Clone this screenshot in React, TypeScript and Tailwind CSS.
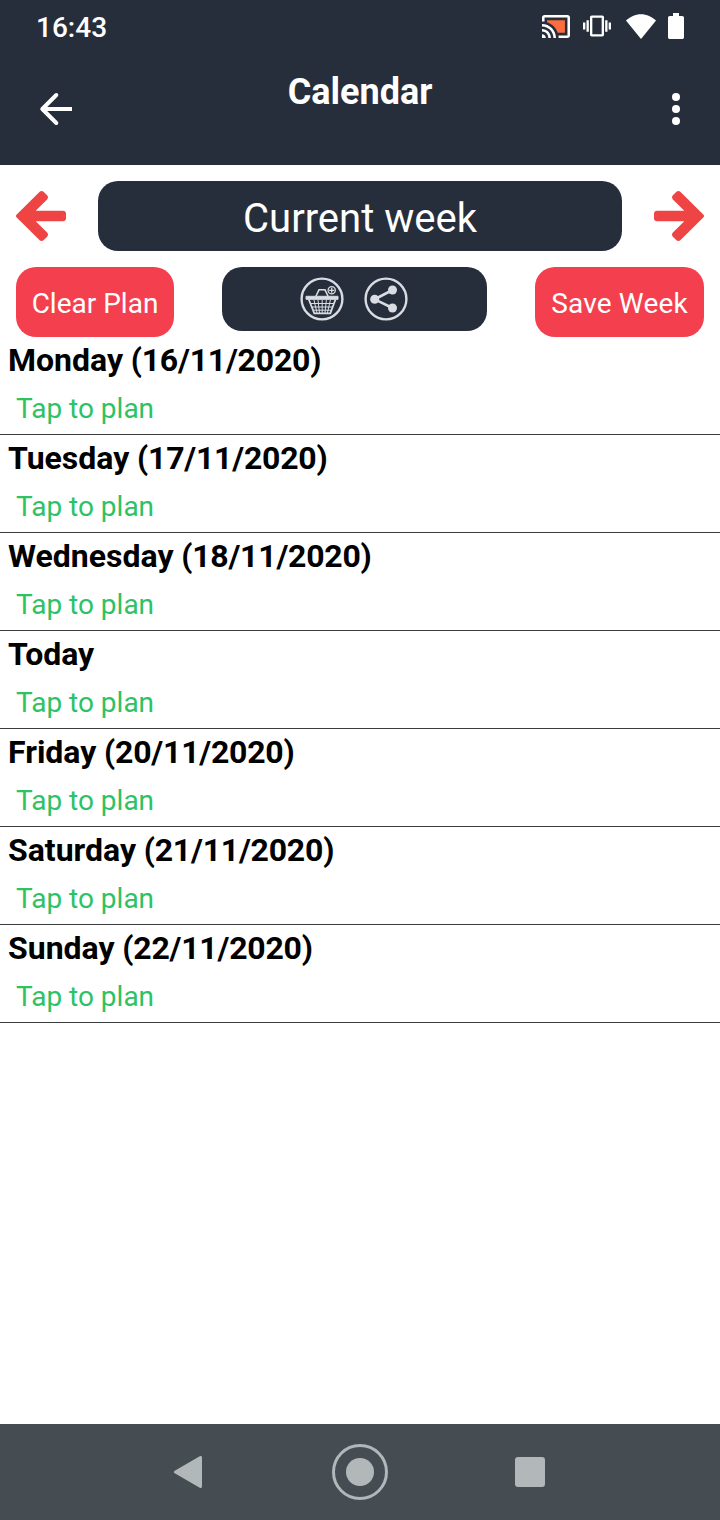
import { ReactNode } from "react";

const DAYS = [
  { name: "Monday", date: "(16/11/2020)" },
  { name: "Tuesday", date: "(17/11/2020)" },
  { name: "Wednesday", date: "(18/11/2020)" },
  { name: "Today" },
  { name: "Friday", date: "(20/11/2020)" },
  { name: "Saturday", date: "(21/11/2020)" },
  { name: "Sunday", date: "(22/11/2020)" },
];

function StatusBar() {
  return (
    <div className="flex h-[54px] items-start justify-between px-9">
      <span className="pt-px text-[28px] leading-[54px] font-medium">16:43</span>
      <div className="flex h-[52px] items-center">
        <svg className="mr-[13px] h-[23px] w-7" viewBox="1 3 22 18" fill="white">
          <path
            fill="#fd6d3f"
            d="M19 7H5v1.63c3.96 1.28 7.09 4.41 8.37 8.37H19V7z"
          />
          <path d="M1 18v3h3c0-1.66-1.34-3-3-3zm0-4v2c2.76 0 5 2.24 5 5h2c0-3.87-3.13-7-7-7zM1 10v2c4.97 0 9 4.03 9 9h2c0-6.08-4.93-11-11-11zm20-7H3c-1.1 0-2 .9-2 2v3h2V5h18v14h-7v2h7c1.1 0 2-.9 2-2V5c0-1.1-.9-2-2-2z" />
        </svg>
        <svg className="mr-[15px] h-7 w-7" viewBox="0 0 24 24" fill="white">
          <path d="M0 15h2V9H0v6zm3 2h2V7H3v10zm19-8v6h2V9h-2zm-3 8h2V7h-2v10zM16.5 3h-9C6.67 3 6 3.67 6 4.5v15c0 .83.67 1.5 1.5 1.5h9c.83 0 1.5-.67 1.5-1.5v-15c0-.83-.67-1.5-1.5-1.5zM16 19H8V5h8v14z" />
        </svg>
        <svg className="mr-3 h-[25px] w-[30px]" viewBox="0 0 30 25" fill="white">
          <path d="M0 6.6C4 2.700 9.300.2 15 .2S26 2.700 30 6.600L15 25z" />
        </svg>
        <svg className="h-[26px] w-4" viewBox="0 0 16 26" fill="white">
          <path d="M5 0h6v3h3.200c1 0 1.800.8 1.800 1.800v19.400c0 1-.8 1.800-1.800 1.800H1.800C.8 26 0 25.200 0 24.200V4.800C0 3.800.8 3 1.800 3H5z" />
        </svg>
      </div>
    </div>
  );
}

function AppBar() {
  return (
    <div className="flex h-[111px] items-start justify-between px-8 pt-4">
      <button type="button" aria-label="Back" className="mt-[15px]">
        <svg
          className="h-12 w-12"
          viewBox="0 0 48 48"
          fill="none"
          stroke="white"
          strokeWidth="4"
          strokeLinejoin="round"
        >
          <path d="M40 24H11" />
          <path d="M24.300 10 10.300 24l14 14" strokeLinecap="round" />
        </svg>
      </button>
      <h1 className="text-[36px] leading-[44px] font-bold">Calendar</h1>
      <button type="button" aria-label="More options" className="mt-[15px] flex w-12 justify-end pr-2">
        <svg className="h-12 w-2" viewBox="0 0 8 48" fill="white">
          <circle cx="4" cy="12" r="4" />
          <circle cx="4" cy="24" r="4" />
          <circle cx="4" cy="36" r="4" />
        </svg>
      </button>
    </div>
  );
}

function WeekArrow({ flip = false }: { flip?: boolean }) {
  return (
    <button type="button" aria-label={flip ? "Next week" : "Previous week"}>
      <svg
        className={flip ? "h-[50px] w-[50px] -scale-x-100" : "h-[50px] w-[50px]"}
        viewBox="0 0 50 50"
        fill="#ee4544"
      >
        <path d="M.5 23.700 23.400.9c1.300-1.200 3.100-1.200 4.400 0l3.300 3.300c1.200 1.200 1.200 3 0 4.200L19.700 19.700H47c1.800 0 3 1.200 3 2.800v5c0 1.600-1.200 2.800-3 2.800H19.700l11.400 11.300c1.200 1.200 1.200 3 0 4.200l-3.300 3.300c-1.300 1.200-3.100 1.200-4.400 0L.5 26.300c-.7-.8-.7-1.800 0-2.600z" />
      </svg>
    </button>
  );
}

function RedButton({ className, children }: { className: string; children: ReactNode }) {
  return (
    <button
      type="button"
      className={`h-[70px] rounded-[20px] bg-[#f43f4f] pt-1 text-center text-[28px] leading-8 whitespace-nowrap text-white ${className}`}
    >
      {children}
    </button>
  );
}

function BasketIcon() {
  return (
    <svg className="h-11 w-11" viewBox="0 0 44 44" fill="none" stroke="#d9dce2">
      <circle cx="22" cy="22" r="20.400" strokeWidth="2.400" />
      <path d="M15.800 19.500 19 12.800h6l3.200 6.700" strokeWidth="1.600" />
      <path d="M6 19.300h32v3H6z" fill="#d9dce2" strokeWidth="1" />
      <path d="M8.800 22.500 14.300 36.300h16l5.200-13.800" strokeWidth="1.800" />
      <path
        d="M10.500 26.500h23.500M12 30h20.500M13.500 33.200h17.500M14 23l3 13M18 23l1.500 13M22.200 23v13M26.400 23l-1.500 13M30.400 23l-3 13"
        strokeWidth="1"
      />
      <circle cx="31.700" cy="13.300" r="3.600" strokeWidth="1.300" />
      <path d="M29.200 13.300h5M31.700 10.800v5" strokeWidth="1.300" />
    </svg>
  );
}

function ShareIcon() {
  return (
    <svg className="h-11 w-11" viewBox="0 0 44 44" fill="none" stroke="#d9dce2">
      <circle cx="22" cy="22" r="20.400" strokeWidth="2.400" />
      <path d="M28.500 13 10.700 22.300 28.500 31" strokeWidth="2.600" />
      <g fill="#d9dce2" stroke="none">
        <circle cx="28.500" cy="13" r="4.500" />
        <circle cx="10.700" cy="22.300" r="4.500" />
        <circle cx="28.500" cy="31" r="4.500" />
      </g>
    </svg>
  );
}

function DayRow({ name, date }: { name: string; date?: string }) {
  return (
    <li className="h-[98px] border-b border-[#3c3c3c]">
      <h2 className="pt-1 pl-2 text-[32px] leading-[38px] font-bold text-black">
        {name}
        {date ? <span className="tracking-[-0.22px]"> {date}</span> : null}
      </h2>
      <p className="pt-[13px] pl-4 text-[28px] leading-[34px] text-[#2dc264]">Tap to plan</p>
    </li>
  );
}

// Android three-button navigation
function NavBar() {
  return (
    <nav className="grid h-24 grid-cols-[170px_170px_170px] items-center justify-center justify-items-center bg-[#454d53]">
      <svg
        className="mr-1 h-8 w-8"
        viewBox="0 0 32 32"
        fill="#b2b7b9"
        stroke="#b2b7b9"
        strokeWidth="3"
        strokeLinejoin="round"
      >
        <path d="M3.500 16 28.500 1.500v29z" />
      </svg>
      <svg className="h-14 w-14" viewBox="0 0 56 56">
        <circle cx="28" cy="28" r="26.500" fill="none" stroke="#b2b7b9" strokeWidth="3" />
        <circle cx="28" cy="28" r="14" fill="#b2b7b9" />
      </svg>
      <div className="h-[30px] w-[30px] rounded-[3px] bg-[#b2b7b9]" />
    </nav>
  );
}

export default function App() {
  return (
    <div className="flex h-[1520px] w-[720px] flex-col bg-white font-['Roboto',sans-serif]">
      <header className="bg-[#272e3b] text-white">
        <StatusBar />
        <AppBar />
      </header>

      <div className="flex items-center justify-between px-4 pt-4">
        <WeekArrow />
        <div className="flex h-[70px] w-[524px] items-center justify-center rounded-[20px] bg-[#272e3b] pt-1.5 text-[40px] leading-none text-white">
          Current week
        </div>
        <WeekArrow flip />
      </div>

      <div className="flex items-start justify-between px-4 pt-4">
        <RedButton className="w-[158px]">Clear Plan</RedButton>
        <div className="flex h-16 w-[265px] items-center justify-center gap-5 rounded-[20px] bg-[#272e3b] pr-px">
          <BasketIcon />
          <ShareIcon />
        </div>
        <RedButton className="w-[169px] tracking-[0.15px]">Save Week</RedButton>
      </div>

      <ul className="flex-1">
        {DAYS.map((day) => (
          <DayRow key={day.name} name={day.name} date={day.date} />
        ))}
      </ul>

      <NavBar />
    </div>
  );
}
